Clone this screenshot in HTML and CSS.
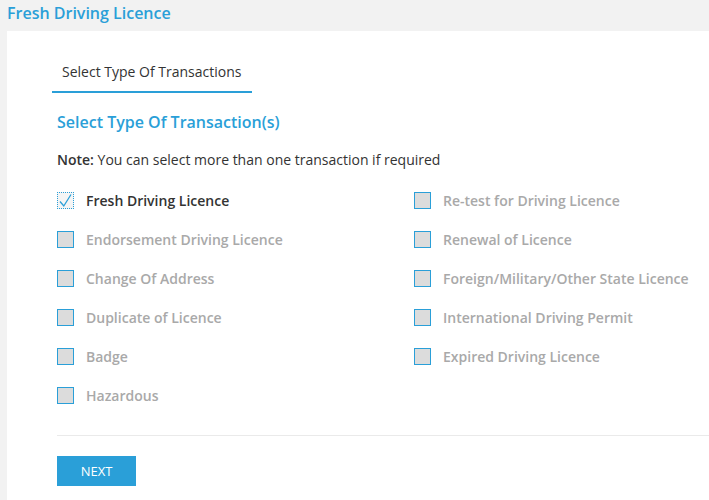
FILE: index.html
```html
<!DOCTYPE html>
<html lang="en">
  <head>
    <meta charset="UTF-8" />
    <meta name="viewport" content="width=device-width, initial-scale=1.0" />
    <title>Fresh Driving Licence</title>
    <link rel="stylesheet" href="styles.css">
  </head>
  <body>
    <h2 class="page-title">Fresh Driving Licence</h2>

    <div class="card">
      <ul class="tabs">
        <li class="tab active">Select Type Of Transactions</li>
      </ul>

      <h3 class="section-title">Select Type Of Transaction(s)</h3>
      <p class="note"><b>Note:</b> You can select more than one transaction if required</p>

      <div class="options">
        <label class="option checked">
          <span class="box">
            <svg viewBox="0 0 17 17" width="17" height="17"><path d="M3 9.5 L6.8 14 L14 2.5" fill="none" stroke="#2a9fd8" stroke-width="1.3"/></svg>
          </span>
          Fresh Driving Licence
        </label>
        <label class="option"><span class="box"></span>Endorsement Driving Licence</label>
        <label class="option"><span class="box"></span>Change Of Address</label>
        <label class="option"><span class="box"></span>Duplicate of Licence</label>
        <label class="option"><span class="box"></span>Badge</label>
        <label class="option"><span class="box"></span>Hazardous</label>
        <label class="option"><span class="box"></span>Re-test for Driving Licence</label>
        <label class="option"><span class="box"></span>Renewal of Licence</label>
        <label class="option"><span class="box"></span>Foreign/Military/Other State Licence</label>
        <label class="option"><span class="box"></span>International Driving Permit</label>
        <label class="option"><span class="box"></span>Expired Driving Licence</label>
      </div>

      <hr class="divider">

      <button class="btn-next">NEXT</button>
    </div>
  </body>
</html>
```

FILE: styles.css
```css
:root {
  --blue: #2a9fd8;
  --page-bg: #f2f2f2;
  --text-color: #333;
  --muted: #a9a9a9;
}

body {
  margin: 0;
  padding: 2px 0 0 7px;
  background: var(--page-bg);
  font-family: "Open Sans", "Noto Sans", sans-serif;
  color: var(--text-color);
}

.page-title {
  margin: 0 0 7px;
  font-size: 16px;
  line-height: 22px;
  font-weight: 600;
  color: var(--blue);
}

.card {
  background: white;
  padding: 24px 0 14px 50px;
}

.tabs {
  list-style: none;
  margin: 0 0 0 -5px;
  padding: 0;
  display: flex;
}

.tab {
  width: 180px;
  padding: 7px 10px 9px;
  font-size: 14px;
  line-height: 20px;
}

.tab.active {
  border-bottom: 2px solid var(--blue);
}

.section-title {
  margin: 18px 0 17px;
  font-size: 16px;
  line-height: 22px;
  font-weight: 600;
  color: var(--blue);
}

.note {
  margin: 0 0 11px;
  font-size: 14px;
  line-height: 20px;
}

.note b {
  font-weight: 600;
}

.options {
  display: grid;
  grid-template-columns: 357px 1fr;
  grid-template-rows: repeat(6, 39px);
  grid-auto-flow: column;
}

.option {
  display: flex;
  align-items: center;
  gap: 12px;
  font-size: 14px;
  font-weight: 600;
  color: var(--muted);
}

.box {
  width: 15px;
  height: 15px;
  border: 1px solid var(--blue);
  background: #dcdcdc;
  display: inline-flex;
}

.option.checked {
  color: var(--text-color);
}

.option.checked .box {
  border: 1px dotted var(--blue);
  background: #f5f5f5;
}

.option.checked svg {
  margin: -1px;
}

.divider {
  margin: 20px 0 20px;
  border: 0;
  border-top: 1px solid #eaeaea;
}

.btn-next {
  width: 79px;
  height: 30px;
  border: 0;
  background: var(--blue);
  color: white;
  font-family: inherit;
  font-size: 13px;
  cursor: pointer;
}
```
